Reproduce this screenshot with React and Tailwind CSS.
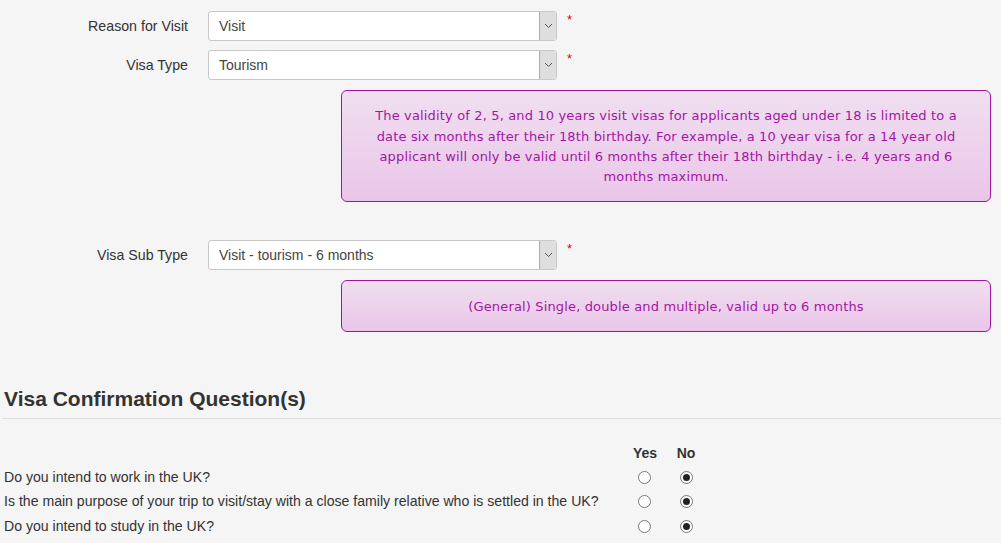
import React from "react";

const font = { fontFamily: '"Liberation Sans", Arial, sans-serif' };
const noteFont = { fontFamily: '"DejaVu Sans", Tahoma, sans-serif' };

function Chevron() {
  return (
    <svg width="9" height="6" viewBox="0 0 9 6" fill="none">
      <path d="M1 1l3.5 3.5L8 1" stroke="#555" strokeWidth="1" />
    </svg>
  );
}

function SelectRow({ label, value }) {
  return (
    <div className="flex items-center h-[30px]">
      <div className="w-[188px] mt-[2px] text-right text-[14.2px] text-[#333]">{label}</div>
      <div className="ml-[20px] w-[349px] h-[30px] bg-white border border-[#c8c8c8] rounded-[3px] flex items-stretch overflow-hidden">
        <div className="flex-1 flex items-center pl-[10px] pt-[1px] text-[14px] text-[#444]">{value}</div>
        <div className="w-[17px] bg-[#dedede] border-l border-[#ababab] flex items-center justify-center">
          <Chevron />
        </div>
      </div>
      <span className="self-start ml-[10px] mt-[2px] text-[13px] leading-none text-[#e00]">*</span>
    </div>
  );
}

function Note({ children, className }) {
  return (
    <div
      className={`ml-[341px] w-[650px] border border-[#a0159f] rounded-[6px] bg-gradient-to-b from-[#f0dff0] to-[#eac5e9] text-[#a316a3] text-[13px] tracking-[0.15px] text-center flex items-center justify-center ${className}`}
      style={noteFont}
    >
      {children}
    </div>
  );
}

function Radio({ checked }) {
  return (
    <span className="w-[13px] h-[13px] rounded-full border border-[#777] bg-white flex items-center justify-center">
      {checked && <span className="w-[7px] h-[7px] rounded-full bg-[#222]" />}
    </span>
  );
}

const questions = [
  "Do you intend to work in the UK?",
  "Is the main purpose of your trip to visit/stay with a close family relative who is settled in the UK?",
  "Do you intend to study in the UK?",
];

export default function App() {
  return (
    <div className="w-[1001px] h-[543px] bg-[#f5f5f5] overflow-hidden" style={font}>
      <div className="pt-[11px] flex flex-col">
        <SelectRow label="Reason for Visit" value="Visit" />
        <div className="mt-[9px]">
          <SelectRow label="Visa Type" value="Tourism" />
        </div>
        <Note className="mt-[10px] h-[112px] px-[30px] leading-[20.3px] pt-[2px]">
          The validity of 2, 5, and 10 years visit visas for applicants aged under 18 is limited to a date six months after their 18th birthday. For example, a 10 year visa for a 14 year old applicant will only be valid until 6 months after their 18th birthday - i.e. 4 years and 6 months maximum.
        </Note>
        <div className="mt-[38px]">
          <SelectRow label="Visa Sub Type" value="Visit - tourism - 6 months" />
        </div>
        <Note className="mt-[10px] h-[52px] pt-[1px]">
          (General) Single, double and multiple, valid up to 6 months
        </Note>
      </div>

      <div className="mt-[55px] pl-[4px] text-[21px] font-bold text-[#333] leading-[24px]">
        Visa Confirmation Question(s)
      </div>
      <div className="ml-[2px] mt-[7px] border-t border-[#dcdcdc]" />

      <div className="mt-[25px] pl-[4px]">
        <div className="flex h-[18px] items-center text-[14px] font-bold text-[#333]">
          <div className="w-[627px]" />
          <div className="w-[28px] text-center">Yes</div>
          <div className="w-[28px] ml-[13px] text-center">No</div>
        </div>
        <div className="mt-[3px] flex flex-col">
          {questions.map((q) => (
            <div key={q} className="flex items-center h-[24.5px] text-[14.1px] text-[#333]">
              <div className="w-[626px]">{q}</div>
              <div className="w-[28px] flex justify-center"><Radio /></div>
              <div className="w-[28px] ml-[14px] flex justify-center"><Radio checked /></div>
            </div>
          ))}
        </div>
      </div>
    </div>
  );
}
